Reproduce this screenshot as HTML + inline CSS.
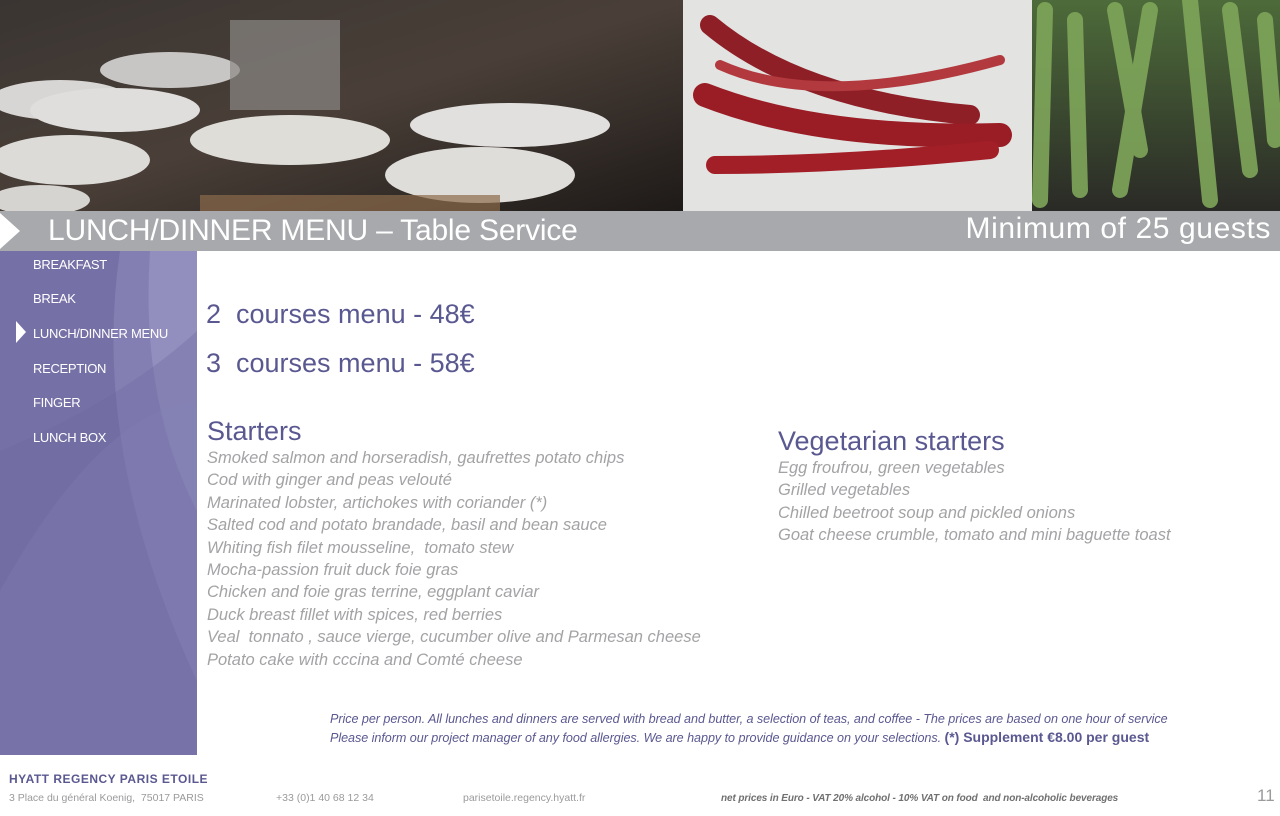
<!DOCTYPE html>
<html><head><meta charset="utf-8"><style>
*{margin:0;padding:0;box-sizing:border-box}
body{width:1280px;height:816px;position:relative;background:#fff;font-family:"Liberation Sans",sans-serif;overflow:hidden}
.abs{position:absolute}
.banner{left:0;top:211px;width:1280px;height:40px;background:#a7a9ac;color:#fff}
.side{left:0;top:251px;width:197px;height:504px;background:#7571a6;overflow:hidden}
.nav{position:absolute;left:33px;color:#fff;font-size:13px;letter-spacing:-0.3px}
.h{color:#5a5890;font-size:27px}
.it{color:#a3a3a6;font-style:italic;font-size:16.5px;line-height:22.4px;font-weight:300}
</style></head><body>
<svg class="abs" style="left:0;top:0" width="1280" height="211">
<defs>
<linearGradient id="g1" x1="0" y1="0" x2="1" y2="1"><stop offset="0" stop-color="#3a3532"/><stop offset=".5" stop-color="#4a3f38"/><stop offset="1" stop-color="#1e1a18"/></linearGradient>
<linearGradient id="g3" x1="0" y1="0" x2="0" y2="1"><stop offset="0" stop-color="#4d6b3a"/><stop offset="1" stop-color="#2a2a26"/></linearGradient>
</defs>
<rect width="683" height="211" fill="url(#g1)"/>
<ellipse cx="60" cy="100" rx="70" ry="20" fill="#d8d6d4"/>
<ellipse cx="115" cy="110" rx="85" ry="22" fill="#e0dedc"/>
<ellipse cx="170" cy="70" rx="70" ry="18" fill="#c8c6c4"/>
<ellipse cx="70" cy="160" rx="80" ry="25" fill="#dcdbd8"/>
<ellipse cx="290" cy="140" rx="100" ry="25" fill="#deddd8"/>
<ellipse cx="510" cy="125" rx="100" ry="22" fill="#e2e0de"/>
<ellipse cx="480" cy="175" rx="95" ry="28" fill="#dfddda"/>
<ellipse cx="40" cy="200" rx="50" ry="15" fill="#d6d4d0"/>
<rect x="230" y="20" width="110" height="90" fill="#8a8884" opacity=".7"/>
<rect x="200" y="195" width="300" height="16" fill="#8a6a4a" opacity=".7"/>
<rect x="683" y="0" width="349" height="211" fill="#e3e3e1"/>
<g stroke-linecap="round" fill="none">
<path d="M710 25 Q800 100 970 115" stroke="#8e1f26" stroke-width="20"/>
<path d="M720 65 Q820 110 1000 60" stroke="#b23a3e" stroke-width="10"/>
<path d="M705 95 Q820 140 1000 135" stroke="#9a1d25" stroke-width="24"/>
<path d="M715 165 Q840 165 990 150" stroke="#a31f28" stroke-width="18"/>
</g>
<rect x="1032" y="0" width="248" height="211" fill="url(#g3)"/>
<g stroke="#7fa65a" stroke-width="16" stroke-linecap="round" opacity=".9">
<path d="M1045 10 L1040 200"/><path d="M1075 20 L1080 190"/><path d="M1115 10 L1140 150"/><path d="M1150 10 L1120 190"/><path d="M1190 0 L1210 200"/><path d="M1230 10 L1250 170"/><path d="M1265 20 L1275 140"/>
</g>
</svg>
<div class="abs banner">
<svg class="abs" style="left:0;top:0" width="22" height="40"><path d="M0 2 L20 20 L0 38Z" fill="#fff"/></svg>
<div class="abs" style="left:48px;top:3px;font-size:30px;letter-spacing:-0.2px">LUNCH/DINNER MENU – Table Service</div>
<div class="abs" style="right:9px;top:1px;font-size:30px;letter-spacing:0.6px">Minimum of 25 guests</div>
</div>
<div class="abs side">
<svg class="abs" style="left:0;top:0" width="197" height="504">
<path d="M120 0 Q90 200 197 430 L197 0Z" fill="#8d89ba" opacity=".6"/>
<path d="M150 0 Q140 150 197 260 L197 0Z" fill="#a09dc8" opacity=".5"/>
<path d="M0 200 Q120 150 197 80 L197 504 L0 504Z" fill="#6d69a0" opacity=".35"/>
<path d="M0 340 Q100 160 197 150 L197 504 L0 504Z" fill="#8581b5" opacity=".3"/>
</svg>
<div class="nav" style="top:6px">BREAKFAST</div>
<div class="nav" style="top:40px">BREAK</div>
<svg class="abs" style="left:15px;top:70px" width="12" height="22"><path d="M1 0 L11 11 L1 22Z" fill="#fff"/></svg>
<div class="nav" style="top:75px">LUNCH/DINNER MENU</div>
<div class="nav" style="top:110px">RECEPTION</div>
<div class="nav" style="top:144px">FINGER</div>
<div class="nav" style="top:179px">LUNCH BOX</div>
</div>
<div class="abs h" style="left:206px;top:299px">2&nbsp; courses menu - 48€</div>
<div class="abs h" style="left:206px;top:348px">3&nbsp; courses menu - 58€</div>
<div class="abs h" style="left:207px;top:416px">Starters</div>
<div class="abs it" style="left:207px;top:447px">Smoked salmon and horseradish, gaufrettes potato chips<br>Cod with ginger and peas velouté<br>Marinated lobster, artichokes with coriander (*)<br>Salted cod and potato brandade, basil and bean sauce<br>Whiting fish filet mousseline,&nbsp; tomato stew<br>Mocha-passion fruit duck foie gras<br>Chicken and foie gras terrine, eggplant caviar<br>Duck breast fillet with spices, red berries<br>Veal&nbsp; tonnato , sauce vierge, cucumber olive and Parmesan cheese<br>Potato cake with cccina and Comté cheese</div>
<div class="abs h" style="left:778px;top:426px">Vegetarian starters</div>
<div class="abs it" style="left:778px;top:457px">Egg froufrou, green vegetables<br>Grilled vegetables<br>Chilled beetroot soup and pickled onions<br>Goat cheese crumble, tomato and mini baguette toast</div>
<div class="abs" style="left:330px;top:710px;color:#5a5890;font-style:italic;font-size:12.6px;line-height:18px;letter-spacing:-0.05px;width:900px">Price per person. All lunches and dinners are served with bread and butter, a selection of teas, and coffee - The prices are based on one hour of service<br>Please inform our project manager of any food allergies. We are happy to provide guidance on your selections. <span style="font-style:normal;font-size:14px;letter-spacing:0;font-weight:bold">(*) Supplement €8.00 per guest</span></div>
<div class="abs" style="left:9px;top:772px;color:#5a5890;font-size:12px;font-weight:bold;letter-spacing:0.5px">HYATT REGENCY PARIS ETOILE</div>
<div class="abs" style="left:9px;top:792px;color:#9a9a9c;font-size:10.5px">3 Place du général Koenig,&nbsp; 75017 PARIS</div>
<div class="abs" style="left:276px;top:792px;color:#9a9a9c;font-size:10.5px">+33 (0)1 40 68 12 34</div>
<div class="abs" style="left:463px;top:792px;color:#9a9a9c;font-size:10.5px">parisetoile.regency.hyatt.fr</div>
<div class="abs" style="left:721px;top:793px;color:#707070;font-size:10px;font-style:italic;font-weight:bold;letter-spacing:-0.1px">net prices in Euro - VAT 20% alcohol - 10% VAT on food&nbsp; and non-alcoholic beverages</div>
<div class="abs" style="left:1257px;top:786px;color:#9a9a9c;font-size:17px">11</div>
</body></html>
